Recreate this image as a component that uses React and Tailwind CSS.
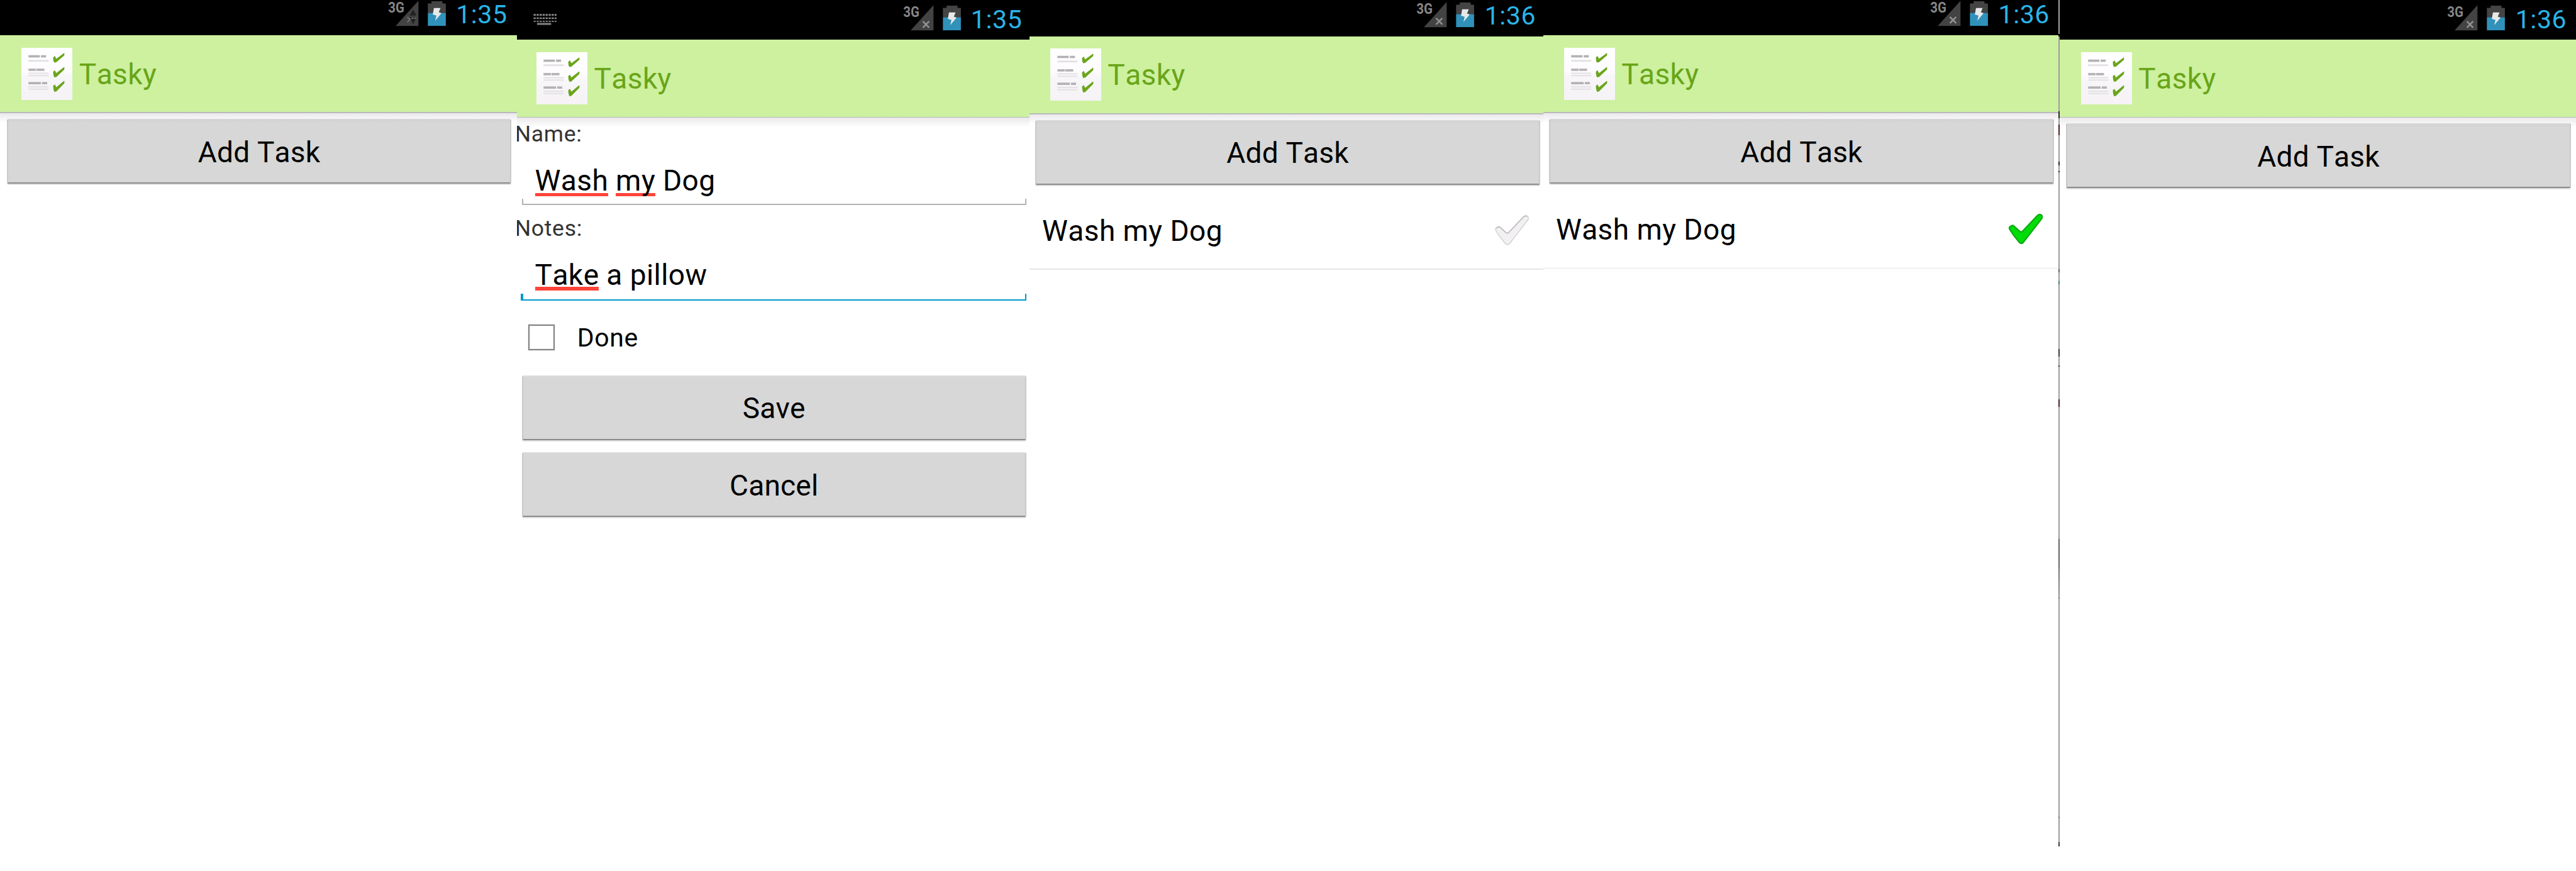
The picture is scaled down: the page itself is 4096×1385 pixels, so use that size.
import React from "react";

function TaskyLogo() {
  return (
    <svg className="h-[83px] w-[81.2px] shrink-0" viewBox="0 0 90 92" preserveAspectRatio="none">
      <defs>
        <linearGradient id="paper" x1="0" y1="0" x2="0" y2="1">
          <stop offset="0" stopColor="#ffffff" />
          <stop offset="0.45" stopColor="#fdfbfe" />
          <stop offset="0.55" stopColor="#f7f6f8" />
          <stop offset="1" stopColor="#f6f2f6" />
        </linearGradient>
      </defs>
      <rect width="90" height="92" fill="url(#paper)" />
      <g fill="#b3b1b3">
        <rect x="12.5" y="13" width="20" height="4" />
        <rect x="34.5" y="13" width="9" height="4" />
        <rect x="12.5" y="36.7" width="13" height="4" />
        <rect x="26.5" y="36.7" width="14" height="4" />
        <rect x="12.5" y="60.3" width="22" height="4" />
        <rect x="36.5" y="60.3" width="9" height="4" />
      </g>
      <g fill="#e3e0e3">
        <rect x="12.5" y="21.5" width="35.5" height="3" />
        <rect x="12.5" y="43.8" width="35.5" height="2.2" />
        <rect x="12.5" y="48" width="35.5" height="2.2" />
        <rect x="12.5" y="67.7" width="35.5" height="2.2" />
        <rect x="12.5" y="71.8" width="35.5" height="2.2" />
      </g>
      <g fill="#6aa51b">
        <path d="M56 17 L59 14.5 L61.5 19.5 L75 9.5 L76 10 L75.5 13.5 L61.5 25.5 L58 26 L56.5 23 Z" />
        <path d="M56 42 L59 39.5 L61.5 44.5 L75 34 L76 34.5 L75.5 38.5 L61.5 51.5 L58 52 L56.5 48 Z" />
        <path d="M56 67 L59 64.5 L61.5 69.5 L75 58.5 L76 59 L75.5 63 L61.5 77 L58 77.5 L56.5 73 Z" />
      </g>
    </svg>
  );
}

function StatusIcons({ transferring }) {
  return (
    <svg className="h-[41.5px] w-[93.8px] shrink-0 overflow-visible" viewBox="0 0 104 46">
      <text
        x="1.5"
        y="22"
        fill="#868686"
        fontFamily="Roboto, sans-serif"
        fontWeight="700"
        fontSize="26.5"
        textLength="28.5"
        lengthAdjust="spacingAndGlyphs"
      >
        3G
      </text>
      <path d="M14.5 45.6 L54.7 45.6 L54.7 1.5 Z" fill="#434343" />
      {transferring ? (
        <g>
          <path d="M45.3 16.5 L51.5 27.5 L39 27.5 Z M39 30 L51.5 30 L45.5 43 Z" fill="#222222" />
          <path d="M35 30 L40 34.5 L35 39 M42 32 L46 32 M47 32 L51 32" fill="none" stroke="#777777" strokeWidth="2" />
        </g>
      ) : (
        <path d="M36 29.8 L47 40.8 M47 29.8 L36 40.8" stroke="#929292" strokeWidth="2.8" />
      )}
      <path d="M71.3 6.2 H77.8 V2.2 H97 V6.2 H103 V23 H71.3 Z" fill="#444444" />
      <rect x="71.3" y="22.8" width="31.7" height="22.8" fill="#3092bb" />
      <path d="M82 14 L93.6 14 L90.6 21.7 L95.4 23.4 L84.2 36.5 L86.4 27.4 L80 25.4 Z" fill="#e6e8ea" />
    </svg>
  );
}

function KeyboardIcon() {
  return (
    <svg className="h-[18px] w-[37px]" viewBox="0 0 41 20">
      <g stroke="#8c8c8c" strokeWidth="3" strokeDasharray="3.8 1.5">
        <path d="M0.5 1.7 H41" />
        <path d="M0.5 7.8 H41" />
        <path d="M0.5 13.2 H41" strokeWidth="2" />
      </g>
      <rect x="6.5" y="16" width="25" height="3.6" fill="#7d7d7d" />
    </svg>
  );
}

function CheckMark({ done }) {
  return (
    <svg className="h-[48px] w-[54.1px]" viewBox="0 0 60 53">
      <path
        d="M1 26 Q0.5 23.5 3 22 L5.5 20.5 Q7 19.6 9 21.2 L19 30.5 Q21.5 33 24 30.8 L50.5 3 Q53 0.6 55.5 1 Q59.5 2.2 59.2 6 Q59 8 57 10 L26 50 Q22.5 54 18.5 50 L8 37 Z"
        fill={done ? "#00dc08" : "#f3f0f3"}
        stroke={done ? "#0ba912" : "#d2d0d2"}
        strokeWidth={done ? 2.4 : 1.6}
      />
      {!done && (
        <path d="M2 23.5 L6 20.5 L9 21.2 L19 30.5 Q21.5 33 24 30.8 L50.5 3 Q53 0.8 57 2" fill="none" stroke="#b9b7b9" strokeWidth="1.6" />
      )}
    </svg>
  );
}

function GrayButton({ children }) {
  return (
    <button className="flex h-[102.8px] w-full shrink-0 items-start justify-center rounded-[3px] border-x-2 border-t-2 border-b-2 border-x-[#cacaca] border-t-[#dedcde] border-b-[#8b8b8b] bg-[#d7d7d7] pt-[27.4px] text-[46px] leading-none tracking-[0.2px] text-black shadow-[0_2px_0_#dedede]">
      {children}
    </button>
  );
}

function Misspelled({ children }) {
  return (
    <span className="relative isolate inline-block after:absolute after:inset-x-0 after:top-[42.6px] after:-z-10 after:h-[5.4px] after:bg-[#ff4439]">
      {children}
    </span>
  );
}

function Screen({ className, inner, status, time, keyboard, transferring, children }) {
  return (
    <section className={`flex h-full shrink-0 overflow-hidden bg-white ${className}`}>
      <div className={`flex w-[824px] shrink-0 flex-col ${inner}`}>
        <div className={`flex shrink-0 items-end justify-between bg-black pr-[17.4px] pl-[29.7px] ${status}`}>
          <div className="pb-[23.5px]">{keyboard && <KeyboardIcon />}</div>
          <div className="flex items-end">
            <div className="pb-[14.5px]">
              <StatusIcons transferring={transferring} />
            </div>
            <time className="ml-[15.5px] pb-[11.5px] text-[41px] leading-none tracking-[0.6px] text-[#2bb4e8]">{time}</time>
          </div>
        </div>
        <header className="relative z-10 h-[124.4px] shrink-0 after:absolute after:inset-x-0 after:top-full after:h-[15px] after:bg-linear-to-b after:from-[#1a001a17] after:to-transparent">
          <div className="flex h-[122.6px] items-start bg-[#cdf19f] pt-[19.8px] pl-[34.3px]">
            <TaskyLogo />
            <h1 className="mt-[19px] ml-[10.3px] text-[46px] leading-none tracking-[0.4px] text-[#69a519]">Tasky</h1>
          </div>
          <div className="h-[1.8px] bg-[#b9b9bb]" />
        </header>
        {children}
      </div>
    </section>
  );
}

function TaskList({ tasks }) {
  return (
    <main className="flex flex-col">
      <div className="px-[10.8px] pt-[9px]">
        <GrayButton>Add Task</GrayButton>
      </div>
      {tasks.map((task) => (
        <div key={task.name}>
          <div className="flex h-[133.5px] items-start justify-between pr-[28.8px] pl-[21.5px]">
            <span className="pt-[49.7px] text-[46px] leading-none tracking-[0.45px] text-black">{task.name}</span>
            <div className="pt-[47.8px]">
              <CheckMark done={task.done} />
            </div>
          </div>
          <div className="h-[1.8px] bg-[#e5e5e5]" />
        </div>
      ))}
    </main>
  );
}

function TaskForm() {
  return (
    <main className="flex flex-col">
      <label className="mt-[8.5px] h-[35.1px] text-[35.6px] leading-none tracking-[0.7px] text-[#333333]">Name:</label>
      <div className="mx-[10.8px] flex h-[95.3px] flex-col justify-between pt-[33.1px]">
        <div className="h-[46px] pl-[21px] text-[46px] leading-none tracking-[0.45px] whitespace-pre text-black">
          <Misspelled>Wash</Misspelled> <Misspelled>my</Misspelled> Dog
        </div>
        <div className="h-[10.8px] border-x-2 border-b-2 border-[#b2b2b2]" />
      </div>
      <label className="mt-[19.4px] h-[29.7px] overflow-hidden text-[35.6px] leading-none tracking-[0.7px] text-[#333333]">Notes:</label>
      <div className="mr-[10.8px] ml-[9px] flex h-[102.3px] flex-col justify-between pt-[38.4px]">
        <div className="h-[46px] pl-[22.8px] text-[46px] leading-none tracking-[0.45px] text-black">
          <Misspelled>Take</Misspelled> a pillow
        </div>
        <div className="h-[10.8px] border-r-2 border-b-2 border-l-4 border-[#0099cc]" />
      </div>
      <label className="mt-[37.9px] flex h-[41.5px] items-start pl-[21.6px]">
        <span className="h-[41.5px] w-[41.5px] border-2 border-[#858585] shadow-[0_0_0_1px_#f0ebf0,inset_0_0_0_1px_#f0ebf0]" />
        <span className="ml-[36px] pt-[1.8px] text-[41px] leading-none tracking-[0.6px] text-black">Done</span>
      </label>
      <div className="mt-[39.6px] flex flex-col gap-[19.9px] px-[10.8px]">
        <GrayButton>Save</GrayButton>
        <GrayButton>Cancel</GrayButton>
      </div>
    </main>
  );
}

function Seam() {
  return (
    <div className="flex h-full w-[1.8px] shrink-0 flex-col bg-white">
      <div className="h-[54px] bg-[#a4a4a2]" />
      <div className="h-[4px] bg-black" />
      <div className="h-[119px] bg-[#9c9c9a]" />
      <div className="h-[11px] bg-[#2c2424]" />
      <div className="h-[10px] bg-[#9c9c9a]" />
      <div className="h-[17px] bg-[#4a2022]" />
      <div className="h-[42px] bg-[#9c9c9a]" />
      <div className="h-[6px] bg-[#2c2424]" />
      <div className="h-[9px] bg-[#9c9c9a]" />
      <div className="h-[2px] bg-[#2c2424]" />
      <div className="h-[154px] bg-[#9c9c9a]" />
      <div className="h-[5px] bg-[#5a6266]" />
      <div className="h-[14px] bg-[#9c9c9a]" />
      <div className="h-[5px] bg-[#3f8078]" />
      <div className="h-[103px] bg-[#9c9c9a]" />
      <div className="h-[12px] bg-[#2e3d48]" />
      <div className="h-[14px] bg-[#9c9c9a]" />
      <div className="h-[2px] bg-[#333333]" />
      <div className="h-[52px] bg-[#9c9c9a]" />
      <div className="h-[12px] bg-[#452425]" />
      <div className="h-[210px] bg-[#9c9c9a]" />
      <div className="h-[45px] bg-[#646464]" />
      <div className="h-[48px] bg-linear-to-b from-[#707070] to-[#949494]" />
      <div className="h-[2px] bg-[#707070]" />
      <div className="h-[347px] bg-[#9c9c9a]" />
      <div className="h-[2px] bg-[#707070]" />
      <div className="h-[38px] bg-[#9c9c9a]" />
      <div className="h-[7px] bg-[#3c3c3c]" />
    </div>
  );
}

export default function App() {
  return (
    <div className="flex h-[1385px] w-[4096px] overflow-hidden bg-white font-[Roboto,sans-serif] [font-kerning:none]">
      <Screen className="w-[822.3px]" inner="" status="h-[55.9px]" time="1:35" transferring>
        <TaskList tasks={[]} />
      </Screen>
      <Screen className="w-[815px]" inner="-ml-[3.6px]" status="h-[63.1px]" time="1:35" keyboard>
        <TaskForm />
      </Screen>
      <Screen className="w-[816.9px]" inner="-ml-[1.8px]" status="h-[57.7px]" time="1:36">
        <TaskList tasks={[{ name: "Wash my Dog", done: false }]} />
      </Screen>
      <Screen className="w-[818.6px]" inner="-ml-[1.8px]" status="h-[55.9px]" time="1:36">
        <TaskList tasks={[{ name: "Wash my Dog", done: true }]} />
      </Screen>
      <Seam />
      <Screen className="w-[821.4px]" inner="" status="h-[63.1px]" time="1:36">
        <TaskList tasks={[]} />
      </Screen>
    </div>
  );
}
